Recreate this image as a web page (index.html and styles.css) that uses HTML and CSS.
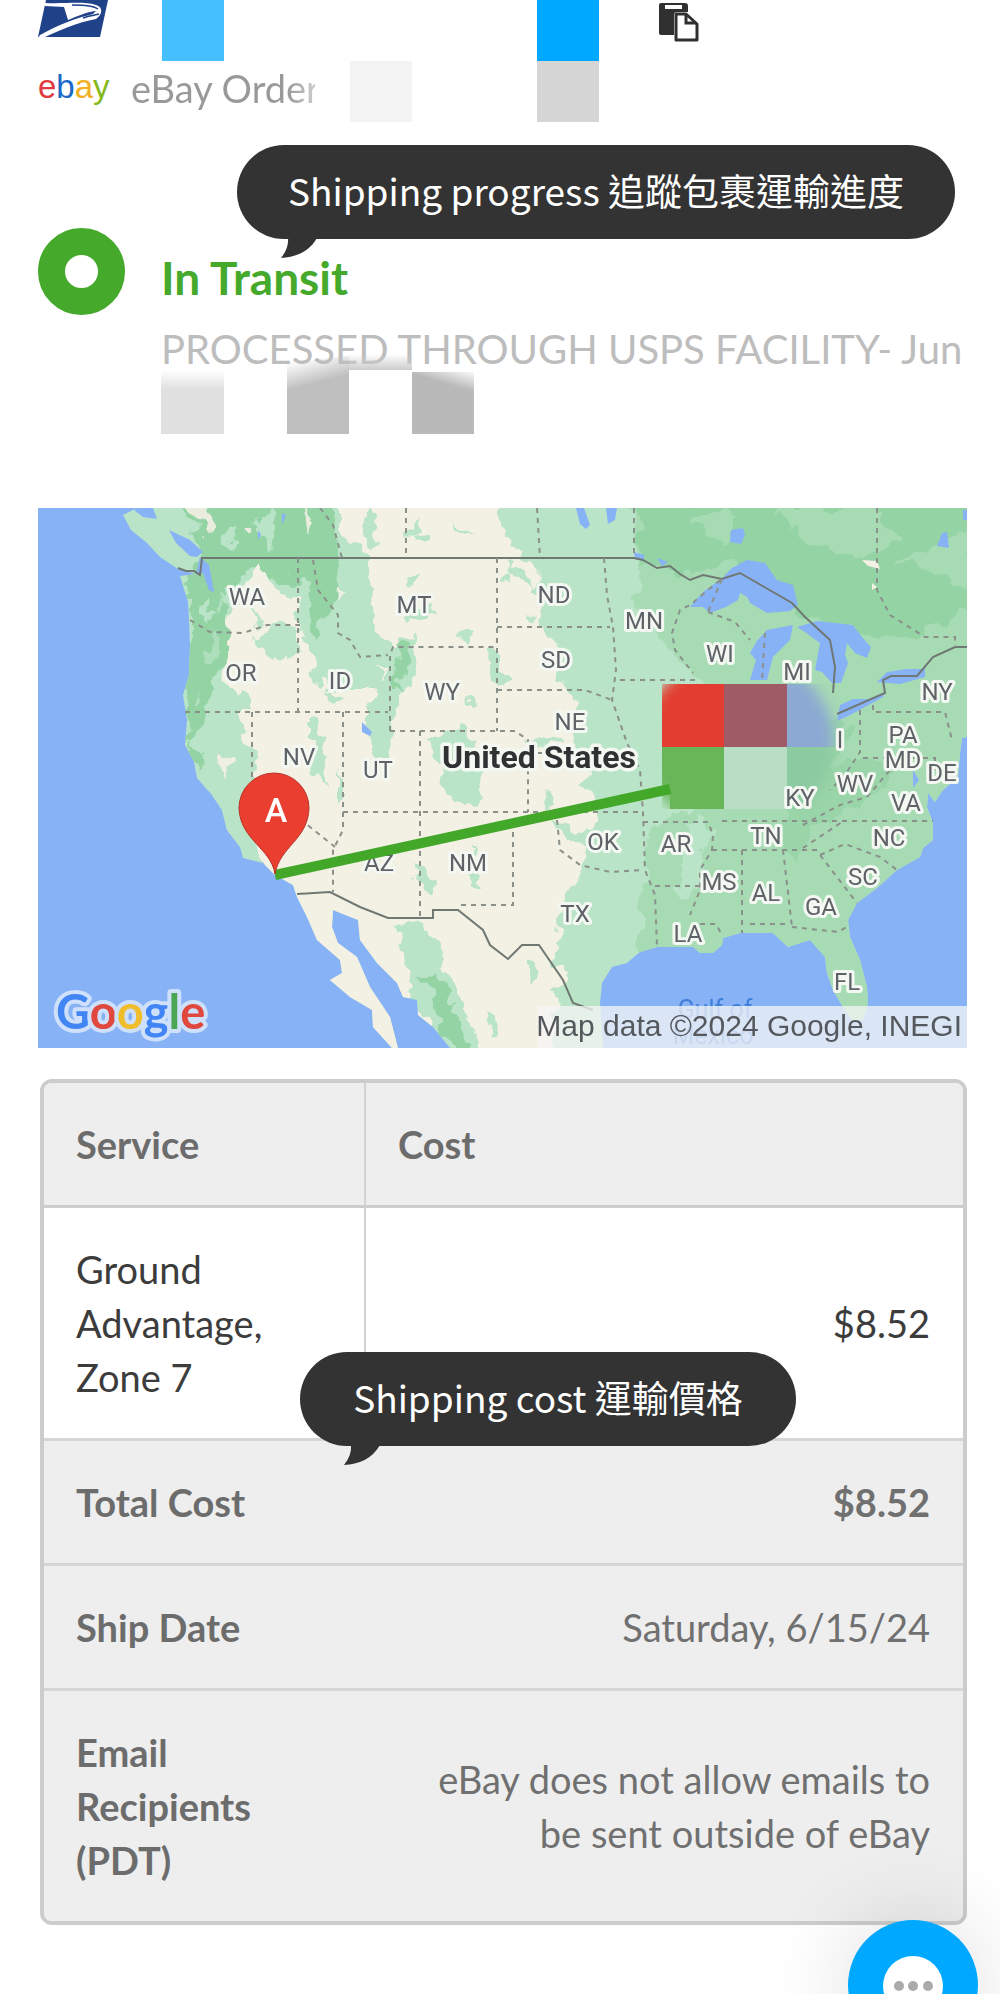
FILE: index.html
```html
<!DOCTYPE html>
<html lang="en">
<head>
<meta charset="utf-8">
<meta name="viewport" content="width=device-width, initial-scale=1">
<title>Shipment details</title>
<link rel="stylesheet" href="styles.css">
</head>
<body>
<main class="page">
  <header class="refs">
    <div class="ref ref-carrier">
      <svg class="usps" viewBox="0 0 70 38" role="img" aria-label="USPS">
        <path fill="#1f4289" d="M8 0H70L62 37H0z"/>
        <path fill="#fff" d="M7 3C28 4 45 1 58 5C65 7 65 14 58 19C40 22 20 31 5 38H0L2 35C20 25 38 18 55 14L58 11C48 12 40 16 30 20L26 7L7 6z"/>
        <path fill="none" stroke="#1f4289" stroke-width="1.5" d="M34 5C45 5 56 6 60 9M61 14C56 15 50 16 45 18"/>
      </svg>
      <span class="mask mask-sky"></span>
      <span class="mask mask-blue"></span>
      <button class="copy" type="button" aria-label="Copy tracking number">
        <svg viewBox="0 0 40 40">
          <path fill="#303030" d="M2 1H26Q29 1 29 4V10H18Q15 10 15 13V33H2Q0 33 0 31V3Q0 1 2 1z"/>
          <path fill="#fff" d="M6 3H23V7H6z"/>
          <path fill="#fff" stroke="#303030" stroke-width="3" stroke-linejoin="round" d="M17 12H27L38 22V38H17z"/>
          <path fill="none" stroke="#303030" stroke-width="3" d="M27 12V21H37"/>
        </svg>
      </button>
    </div>
    <div class="ref ref-order">
      <span class="ebay"><span class="c-red">e</span><span class="c-blue">b</span><span class="c-yellow">a</span><span class="c-green">y</span></span>
      <span class="order-label">eBay Order</span>
      <span class="mask mask-pale"></span>
      <span class="mask mask-grey"></span>
    </div>
  </header>

  <section class="status">
    <span class="ring"></span>
    <div class="status-text">
      <h1>In Transit</h1>
      <p>PROCESSED THROUGH USPS FACILITY- Jun</p>
      <svg class="hidden-date" viewBox="0 0 314 82">
        <defs>
          <linearGradient id="g1" x1="0" y1="0" x2="0" y2="1"><stop offset="0" stop-color="#e0e0e0" stop-opacity="0"/><stop offset=".3" stop-color="#e0e0e0"/></linearGradient>
          <linearGradient id="g2" gradientUnits="userSpaceOnUse" x1="145" y1="6" x2="152" y2="32"><stop offset="0" stop-color="#bfbfbf" stop-opacity="0"/><stop offset="1" stop-color="#bfbfbf"/></linearGradient>
          <linearGradient id="g3" gradientUnits="userSpaceOnUse" x1="292" y1="12" x2="286" y2="32"><stop offset="0" stop-color="#b9b9b9" stop-opacity="0"/><stop offset="1" stop-color="#b9b9b9"/></linearGradient>
          <linearGradient id="g4" x1="0" y1="0" x2="0" y2="1"><stop offset="0" stop-color="#ccc" stop-opacity="0"/><stop offset="1" stop-color="#ccc"/></linearGradient>
        </defs>
        <path fill="url(#g1)" d="M0 18H63V82H0z"/>
        <path fill="url(#g2)" d="M126 10L188 4V82H126z"/>
        <path fill="url(#g4)" d="M188 2H251V18H188z"/>
        <path fill="url(#g3)" d="M251 20H313V82H251z"/>
      </svg>
    </div>
    <div class="callout callout-progress">Shipping progress 追蹤包裹運輸進度
      <svg class="tail" viewBox="0 0 36 21"><path d="M7 0H36C28 14 15 19 0 20Q8 10 7 0z"/></svg>
    </div>
  </section>

  <svg class="map" viewBox="38 508 929 540" role="img" aria-label="Route map of the United States">
    <defs>
      <clipPath id="land"><path d="M137 508L123 515L131 530L147 543L160 557L178 569L196 574L180 576L188 602L189 620L190 645L189 675L183 695L187 720L185 745L194 762L197 778L212 795L222 810L227 830L240 847L243 858L263 863L275 875L293 885L297 897L307 917L317 940L340 960L342 973L330 980L350 997L372 1010L373 1027L392 1048H398L390 1017L370 987L357 957L338 943L332 927L333 910L358 920L360 940L377 963L397 983L403 997L417 1000L418 1015L433 1027L450 1048H603L600 1003L602 983L612 967L627 963L640 952L657 947H693L700 953H713L722 945L723 938L740 933H773L788 947L810 940L825 957L827 973L833 990L843 1007L852 1020H863L868 1003L867 987L860 960L850 937L848 920L857 903L877 888L897 870L920 857L923 848L933 840V823L927 807L928 793L935 802L943 790L958 777L960 753L962 738L967 737V508z"/></clipPath>
      <filter id="soft" x="-10%" y="-10%" width="120%" height="120%"><feGaussianBlur stdDeviation="7"/></filter>
      <filter id="rough" x="0" y="0" width="100%" height="100%"><feTurbulence type="fractalNoise" baseFrequency=".045" numOctaves="3" seed="4"/><feDisplacementMap in="SourceGraphic" scale="28" xChannelSelector="R" yChannelSelector="G"/></filter>
      <mask id="spot"><ellipse cx="738" cy="742" rx="96" ry="88" fill="#fff" filter="url(#soft)"/><path fill="#fff" d="M690 684H780V809H670V700z"/></mask>
    </defs>
    <path fill="#88b2f6" d="M38 508H967V1048H38z"/>
    <g clip-path="url(#land)">
      <path fill="#b9e4c7" d="M38 508H967V1048H38z"/>
      <g filter="url(#rough)">
        <path fill="#a7dbb4" d="M632 490H990V1030H640V900L650 830L690 800L760 770L700 680L640 620z"/>
        <path fill="#b9e4c7" d="M650 690H730V760L690 815H650zM690 820L715 825L690 900H680z"/>
        <path fill="#94d3a4" d="M637 490H990V590L930 630L870 640L800 612L740 560L690 575L640 560z"/>
        <path fill="#a7dbb4" d="M770 508H880L900 540L860 560L800 535zM690 515H740L720 545zM900 560L967 530V590z"/>
        <path fill="#94d3a4" d="M790 790L850 760L900 765L880 790L810 830L800 865L780 840zM795 700L850 730L830 770L790 790z" opacity=".75"/>
        <path fill="#f3f0e4" d="M345 490H493L507 533L530 560L540 587L532 623L557 640L562 677L578 707L566 745L590 770L577 790L603 810L583 837L580 873L567 897L563 927L550 943L563 977L557 997L550 1060H480L455 990L430 930L398 920L415 1000L450 1060H300L270 880L245 835L222 790L240 740L232 700L220 650L235 600L262 560L280 600L300 625L330 690L390 690L355 620L372 560L345 530z"/>
        <path fill="#b9e4c7" d="M336 555L366 570L372 620L392 645L414 640L412 670L393 710L380 770L365 735L377 690L388 665L340 660L320 690L305 640z"/>
        <path fill="#b9e4c7" d="M400 637L415 640L412 680L395 705zM425 745L455 725L478 740L480 800L455 810L440 780zM485 650L505 660L505 680L495 680zM245 590L292 610L300 635L270 670L255 640zM415 860L440 880L435 895L410 875zM470 845L478 890L470 890zM400 940L435 935L450 975L475 1040L445 1030L410 970zM525 955L543 965L535 985L525 975zM195 715L235 712L258 760L252 800L270 835L235 850L205 790zM275 508L330 520L340 545L300 565z"/>
        <path fill="#b9e4c7" d="M365 510L378 520L370 545L360 540zM414 515L425 530L405 540zM450 515L475 535L465 533zM508 560L540 590L520 585zM395 610L430 600L435 615L400 620zM340 765L350 790L340 805zM550 820L590 830L585 845L555 835zM405 540L430 535V545zM310 720L325 735L320 790L310 770zM410 575L420 570L418 585zM455 630L470 628L468 645zM470 700L478 705L472 710zM500 575L512 568L508 588zM520 745L545 735L560 745L535 750zM540 795L552 800L548 810zM325 690L345 700L330 705zM485 1015L500 1025L490 1030z"/>
        <path fill="#94d3a4" d="M175 490H330L342 560L335 615L315 635L305 585L245 570L225 600L232 640L205 720L185 740L182 695L192 650V615L180 580L195 575L205 560zM420 980L435 970L470 1048H455zM395 640L410 645L400 700zM188 735L205 760L200 775z"/>
        <path fill="#b9e4c7" d="M225 520L235 518L238 550L226 545zM262 515L275 512L270 550L262 545zM300 575L312 580L310 600L302 595zM205 590L214 605L205 625z"/>
        <path fill="#f3f0e4" d="M185 500H213L207 535L195 525zM245 525L258 530L250 540zM295 503L310 520L308 535zM338 590L347 597L338 602zM218 755L230 760L226 785zM345 525L362 515V545L350 540z" opacity=".9"/>
        <path fill="#f3f0e4" d="M260 563L275 590L295 600L298 625L250 632L235 622L241 592zM240 650L275 665L305 650V700L265 710L240 675z"/>
        <path fill="#b9e4c7" d="M207 635L215 640L212 665L202 660zM222 585L228 600L215 610zM197 690L200 700L193 705z" opacity=".7"/>
        <path fill="#b9e4c7" d="M270 640L300 628L298 655L280 665zM215 700L240 690L255 710H215zM245 610L262 618L255 625z"/>
      </g>
      <g fill="#88b2f6">
        <path d="M137 508H153L157 519L143 517L134 510zM169 530L190 540L203 552L197 557L190 556L176 543zM200 557L209 565L214 592L209 590L203 573L196 574z"/>
        <path d="M576 508H584L590 525L586 529L580 524zM606 508H617L615 520L608 524zM731 530L743 528L745 535L741 544L730 542zM942 533L947 532L949 548L937 546zM362 722L372 732L370 736L362 732zM634 552L644 555L644 561L635 559zM657 558L668 562L662 566zM963 510H967V520H963zM282 513L286 515L282 525zM258 530L261 535L258 540z"/>
        <path d="M690 607L703 592L722 578L732 568L747 560L765 563L777 580L793 585L798 605L790 611L767 613L750 603L747 597L740 593L738 600L726 607L710 613L703 607z"/>
        <path d="M793 625L767 630L757 641L750 653L756 660L750 680H767L773 657L790 640z"/>
        <path d="M797 627L817 621L853 625L862 637L871 647L867 658L855 653L847 643L845 655L848 663L841 683H832L822 672L815 670L820 643L805 632z"/>
        <path d="M837 721L840 705L853 699H870L885 692L883 697L863 708L848 716zM877 682L887 672L907 669H925V677L900 684zM913 770L919 780L913 788z"/>
      </g>
      <path fill="#f3f0e4" d="M862 560L877 561L880 569L868 566zM872 583L877 587L872 590z"/>
    </g>
    <g class="borders">
      <path d="M178 568L186 571H194L200 575L202 558H634L643 560L657 568L670 566L680 574L690 580L703 575L722 579L740 573L792 603L805 617L830 640L835 667L833 693M837 714L885 693L883 680L891 676H917L933 657L955 647H967M297 894L330 892L360 907L388 918H433V910H458L483 930L490 945L508 959L522 945H539L563 980L573 1003L593 1010"/>
      <path class="dashed" d="M190 620L210 632L243 633L267 625H300M298 558V712M185 712H388M252 712V780L310 827L335 847M343 712V830L333 850V892M343 812H643M420 731V917M390 731V655L393 647H497M390 731H515L528 740V812M497 558V731M313 560L318 590L338 615V633L350 640L360 657L388 655M320 508L333 525L342 558M406 508V558M537 508L540 558M634 508V555M497 627H610M497 690H585L612 700M604 558L607 595L613 627L616 670L612 700L627 743L640 770L643 812L645 870L655 895L657 947M620 680H695M528 753H628M513 822V905H458M557 820L560 850L580 865L610 872L643 870M722 579L708 612M708 612L735 622L750 640M720 580L690 605L680 610L672 633L675 650L693 673M765 633L762 680M643 822H708L713 835L712 850L700 870V890L690 915M655 886H700M700 924H716L722 935M712 850H820M722 821H933M742 850V933M783 850L792 927M750 924H790M792 927L838 932L850 925M820 855L857 903M820 855L845 844L880 857L897 870M803 848L845 820M803 825L840 805L867 797L890 770M873 705V712H945L952 740M860 710V752L845 775L830 790M863 758H935V770M877 508V590L890 615L925 637H955V647"/>
    </g>
    <text class="country" x="539" y="768">United States</text>
    <g class="gulf"><text x="715" y="1018">Gulf of</text><text x="713" y="1044">Mexico</text></g>
    <g mask="url(#spot)">
      <path fill="#e23d30" d="M662 684H724V747H662z"/><path fill="#a05c66" d="M724 684H787V747H724z"/><path fill="#8ca9d3" d="M787 684H849V747H787z"/>
      <path fill="#68b658" d="M662 747H724V809H662z"/><path fill="#b8dfc6" d="M724 747H787V809H724z"/><path fill="#8ccaa0" d="M787 747H849V809H787z"/>
    </g>
    <g class="states">
      <text x="247" y="605">WA</text><text x="241" y="681">OR</text><text x="340" y="689">ID</text><text x="414" y="613">MT</text><text x="442" y="700">WY</text><text x="299" y="765">NV</text><text x="378" y="778">UT</text><text x="379" y="871">AZ</text><text x="468" y="871">NM</text><text x="554" y="603">ND</text><text x="556" y="668">SD</text><text x="570" y="730">NE</text><text x="644" y="629">MN</text><text x="720" y="662">WI</text><text x="797" y="680">MI</text><text x="840" y="748">I</text><text x="937" y="700">NY</text><text x="903" y="743">PA</text><text x="903" y="768">MD</text><text x="942" y="781">DE</text><text x="855" y="792">WV</text><text x="906" y="811">VA</text><text x="800" y="806">KY</text><text x="766" y="844">TN</text><text x="889" y="846">NC</text><text x="676" y="852">AR</text><text x="603" y="850">OK</text><text x="575" y="922">TX</text><text x="719" y="890">MS</text><text x="766" y="901">AL</text><text x="821" y="915">GA</text><text x="863" y="885">SC</text><text x="688" y="942">LA</text><text x="847" y="990">FL</text>
    </g>
    <path stroke="#43a82a" stroke-width="10" d="M275 875L670 789"/>
    <path fill="#ea3e31" stroke="#b63328" d="M275 874C271 848 240 840 239 808A35 35 0 0 1 309 808C308 840 280 846 275 874z"/>
    <text class="pin" x="276" y="822">A</text>
    <text class="google" x="56" y="1029"><tspan fill="#4285f4">G</tspan><tspan fill="#e0483e">o</tspan><tspan fill="#f0bd2c">o</tspan><tspan fill="#4285f4">g</tspan><tspan fill="#4aa653">l</tspan><tspan fill="#e0483e">e</tspan></text>
    <path fill="#f5f5f5" fill-opacity=".75" d="M538 1006H967V1048H538z"/>
    <text class="credit" x="962" y="1036">Map data ©2024 Google, INEGI</text>
  </svg>

  <section class="costs">
    <table>
      <thead>
        <tr><th scope="col">Service</th><th scope="col">Cost</th></tr>
      </thead>
      <tbody>
        <tr><td>Ground Advantage, Zone 7</td><td>$8.52</td></tr>
      </tbody>
      <tfoot>
        <tr><th scope="row">Total Cost</th><td class="total">$8.52</td></tr>
        <tr><th scope="row">Ship Date</th><td>Saturday, 6/15/24</td></tr>
        <tr><th scope="row">Email Recipients (PDT)</th><td>eBay does not allow emails to<br>be sent outside of eBay</td></tr>
      </tfoot>
    </table>
    <div class="callout callout-cost">Shipping cost 運輸價格
      <svg class="tail" viewBox="0 0 36 21"><path d="M7 0H36C28 14 15 19 0 20Q8 10 7 0z"/></svg>
    </div>
  </section>
</main>
<button class="chat" type="button" aria-label="Open chat">
  <svg viewBox="0 0 130 130"><circle cx="65" cy="66" r="30" fill="#fff"/><g fill="#aaa"><circle cx="51" cy="66" r="5"/><circle cx="65" cy="66" r="5"/><circle cx="80" cy="66" r="5"/></g></svg>
</button>
</body>
</html>
```
FILE: styles.css
```css
* { box-sizing: border-box; }
body {
  margin: 0;
  background: #fff;
  color: #3c3c3c;
  font-family: Lato, "Noto Sans CJK TC", sans-serif;
  font-size: 38px;
  line-height: 54px;
  overflow-x: hidden;
}
h1, p { margin: 0; }
.page { padding: 0 33px 70px 38px; }

.ref { display: flex; height: 61px; }
.usps { width: 70px; height: 38px; }
.mask { flex: none; width: 62px; height: 61px; }
.mask-sky { background: #46bfff; margin-left: 54px; }
.mask-blue { background: #00a9ff; margin-left: 313px; }
.mask-pale { background: #f3f3f3; margin-left: 35px; }
.mask-grey { background: #d5d5d5; margin-left: 125px; }
.copy { width: 40px; height: 40px; margin: 2px 0 0 60px; padding: 0; border: 0; background: none; }
.copy svg, .chat svg { display: block; width: 100%; height: 100%; }
.ebay { width: 93px; font-family: "Liberation Sans", Arial, sans-serif; font-size: 33px; line-height: 52px; }
.c-red { color: #e0393e; }
.c-blue { color: #1b69c6; }
.c-yellow { color: #f2b01e; }
.c-green { color: #86b81b; }
.order-label {
  width: 184px;
  white-space: nowrap;
  background: linear-gradient(90deg, #999 85%, #ccc);
  background-clip: text;
  color: transparent;
}

.status { position: relative; display: flex; gap: 36px; margin-top: 106px; }
.ring { flex: none; width: 87px; height: 87px; border: 27px solid #45a92b; border-radius: 50%; }
.status-text { flex: 1; white-space: nowrap; padding-top: 20px; }
.status h1 { font-size: 46px; line-height: 60px; color: #45a92b; }
.status p { margin-top: 14px; font-size: 40px; color: #bdbdbd; }
.hidden-date { display: block; width: 314px; height: 82px; margin-top: -24px; }

.callout {
  position: absolute;
  height: 94px;
  border-radius: 47px;
  background: #333;
  color: #fff;
  font-family: "Noto Sans CJK TC", sans-serif;
  font-size: 37px;
  line-height: 90px;
  text-align: center;
  white-space: nowrap;
}
.callout-progress { top: -83px; left: 199px; width: 718px; }
.callout-cost { top: 273px; left: 260px; width: 496px; }
.tail { position: absolute; top: 93px; left: 44px; width: 36px; height: 21px; fill: #333; }

.map { display: block; width: 100%; margin-top: 74px; }
.borders path { fill: none; stroke: #6f7873; stroke-width: 2; }
.borders .dashed { stroke: #8a918a; stroke-dasharray: 5 5; }
.map text { font-family: Roboto, sans-serif; paint-order: stroke; stroke-linejoin: round; }
.states { font-size: 24px; fill: #5f6368; stroke: #f4f8f2; stroke-width: 6px; text-anchor: middle; }
.map .country { font-size: 32px; font-weight: 700; fill: #2f3133; stroke: #f4f8f2; stroke-width: 7px; text-anchor: middle; }
.gulf { font-size: 25px; fill: #3f7fdb; text-anchor: middle; }
.map .pin { font-size: 34px; font-weight: 500; fill: #fff; text-anchor: middle; }
.map .google { font-family: Lato, sans-serif; font-size: 47px; font-weight: 700; stroke: #cfe0fb; stroke-width: 8px; }
.map .credit { font-family: "Liberation Sans", Arial, sans-serif; font-size: 30px; fill: #55585c; text-anchor: end; }

.costs { position: relative; margin: 31px 0 0 2px; }
table {
  width: 100%;
  table-layout: fixed;
  border: 4px solid #ccc;
  border-radius: 12px;
  border-spacing: 0;
  overflow: hidden;
}
th, td { padding: 34px 33px 34px 32px; border-bottom: 3px solid #d6d6d6; text-align: left; }
th { color: #6c6c6c; }
td:last-child { text-align: right; }
tr > :first-child { width: 322px; }
thead th, tfoot th, tfoot td { background: #eee; }
thead th { border-bottom-color: #ccc; }
thead th:first-child, tbody td:first-child { border-right: 2px solid #d2d2d2; }
tbody td:first-child { padding-right: 80px; }
tfoot th { padding-right: 80px; }
tfoot td { color: #707070; }
tfoot .total { font-weight: 700; }
tfoot tr:last-child > * { border-bottom: 0; }

.chat {
  position: fixed;
  right: 22px;
  bottom: -56px;
  width: 130px;
  height: 130px;
  padding: 0;
  border: 0;
  border-radius: 50%;
  background: #00a9ff;
  box-shadow: 0 0 90px 0 rgba(0, 0, 0, .14);
}
```
